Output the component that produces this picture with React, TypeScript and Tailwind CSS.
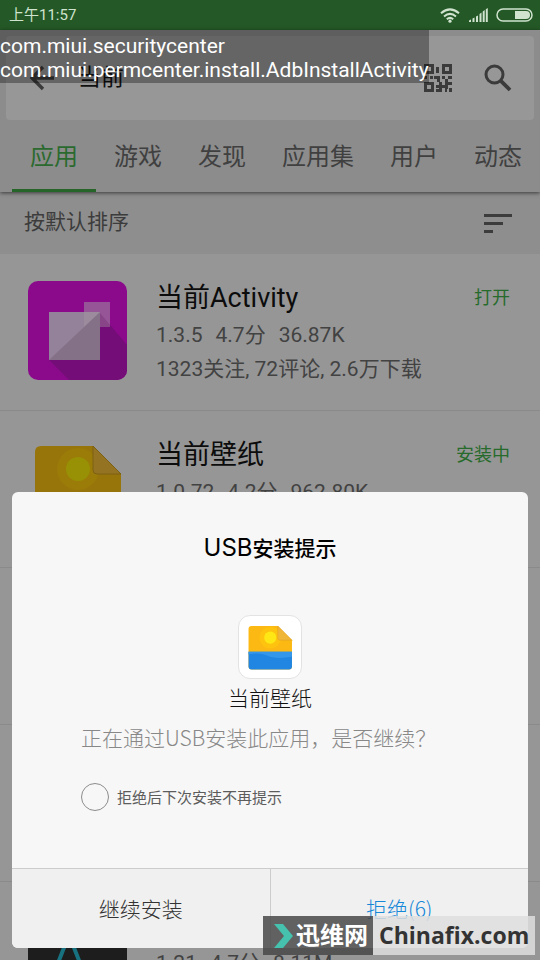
import { useState } from "react";
import type { ReactNode } from "react";
import clsx from "clsx";

type AppEntry = {
  name: string;
  stats: string[];
  counts?: string;
  action?: string;
  icon: ReactNode;
};

const TABS = ["应用", "游戏", "发现", "应用集", "用户", "动态"];

function ActivityIcon() {
  return (
    <svg viewBox="0 0 99 99" className="h-full w-full" aria-hidden="true">
      <defs>
        <clipPath id="activity-clip">
          <rect width="99" height="99" rx="10" />
        </clipPath>
      </defs>
      <g clipPath="url(#activity-clip)">
        <rect width="99" height="99" fill="#8a0a8b" />
        <path d="M21 79 41 99H99V64L72 32Z" fill="#750d78" />
        <rect x="56" y="21" width="26" height="25" fill="#965596" />
        <rect x="21" y="31" width="51" height="48" fill="#94829a" />
        <path d="M56 31H72V46H56Z" fill="#9b8b9d" />
        <path d="M21 79 72 31V79Z" fill="#847187" />
        <path d="M72 32 82 44V46H72Z" fill="#884588" />
      </g>
    </svg>
  );
}

function WallpaperIcon({ dimmed = false }: { dimmed?: boolean }) {
  return (
    <svg viewBox="0 0 99 99" className="h-full w-full" aria-hidden="true">
      <path
        d="M13 8H65L93 36V88Q93 94 87 94H13Q7 94 7 88V14Q7 8 13 8Z"
        fill={dimmed ? "#98750b" : "#fdb913"}
      />
      <circle cx="50" cy="31" r="21" fill={dimmed ? "#9b7c08" : "#fec30f"} />
      <circle cx="50" cy="31" r="12" fill={dimmed ? "#989105" : "#ffe716"} />
      <path
        d="M65 8 93 36H69Q65 36 65 32Z"
        fill={dimmed ? "#947422" : "#f0b638"}
        stroke={dimmed ? "#7d6113" : "#dfa21f"}
      />
      <path d="M7 59H93V88Q93 94 87 94H13Q7 94 7 88Z" fill={dimmed ? "#1b5994" : "#2086e2"} />
      <path d="M7 59H93V69Q60 74 45 67T7 64Z" fill={dimmed ? "#2064a0" : "#3597ea"} />
    </svg>
  );
}

function DarkIcon() {
  return (
    <svg viewBox="0 0 99 99" className="h-full w-full" aria-hidden="true">
      <rect width="99" height="99" rx="14" fill="#1d1d1d" />
      <path d="M30 54 41 26 52 54" fill="none" stroke="#17717f" strokeWidth="4" />
    </svg>
  );
}

const APPS: AppEntry[] = [
  {
    name: "当前Activity",
    stats: ["1.3.5", "4.7分", "36.87K"],
    counts: "1323关注, 72评论, 2.6万下载",
    action: "打开",
    icon: <ActivityIcon />,
  },
  {
    name: "当前壁纸",
    stats: ["1.0.72", "4.2分", "962.80K"],
    action: "安装中",
    icon: <WallpaperIcon dimmed />,
  },
  { name: "", stats: [], icon: null },
  { name: "", stats: [], icon: null },
  { name: "", stats: ["1.21", "4.7分", "8.11M"], icon: <DarkIcon /> },
];

function StatusBar() {
  return (
    <div className="flex h-[30px] shrink-0 items-center justify-between bg-[#245826] pr-[7px] pl-[9px] text-[#cfe3cf]">
      <span className="text-[15px]">上午11:57</span>
      <div className="flex items-center gap-2">
        <svg viewBox="0 0 20 15" className="h-[15px] w-5" aria-hidden="true">
          <g fill="none" stroke="currentColor" strokeWidth="2">
            <path d="M1 5.2Q10-2.4 19 5.2" />
            <path d="M4 8.4Q10 3.4 16 8.4" />
            <path d="M6.8 11.2Q10 8.6 13.2 11.2" />
          </g>
          <circle cx="10" cy="13.2" r="1.6" fill="currentColor" />
        </svg>
        <svg viewBox="0 0 20 14" className="h-[14px] w-5" fill="currentColor" aria-hidden="true">
          <path d="M1 14v-1.5l2-1V14ZM4.5 14v-3.5l2-1V14ZM8 14V8.5l2-1V14ZM11.5 14V6l2-1.5V14ZM14.7 14V3.5l2-1.5V14ZM17.8 14V1.2l2-1.2V14Z" />
        </svg>
        <svg viewBox="0 0 37 14" className="h-[14px] w-[37px]" aria-hidden="true">
          <rect x="1" y="1" width="35" height="12" rx="6" fill="none" stroke="currentColor" strokeWidth="1.5" />
          <path d="M19 3H30a4 4 0 0 1 0 8H19Z" fill="currentColor" />
        </svg>
      </div>
    </div>
  );
}

function SearchBar() {
  return (
    <div className="mx-1.5 flex h-[84px] items-center rounded bg-[#979797] pr-[21px] pl-[22px] text-[#3b3b3b]">
      <button type="button" aria-label="返回">
        <svg viewBox="0 0 40 40" className="size-10" aria-hidden="true">
          <path d="M26 20H5M15 9 4 20l11 11" fill="none" stroke="currentColor" strokeWidth="3.4" />
        </svg>
      </button>
      <input
        type="text"
        aria-label="搜索"
        defaultValue="当前"
        className="ml-[10px] w-0 flex-1 bg-transparent text-[23px] text-[#101010] outline-none"
      />
      <button type="button" aria-label="扫描二维码" className="mr-[31px]">
        <svg viewBox="0 0 28 28" className="size-7" fill="currentColor" aria-hidden="true">
          <path
            fillRule="evenodd"
            d="M0 0h10v10H0ZM3 3v4h4V3ZM18 0h10v10H18ZM21 3v4h4V3ZM0 18h10v10H0ZM3 21v4h4v-4Z"
          />
          <path d="M12 3h3v6h-3ZM0 12h3v3H0ZM6 12h3v3H6ZM10 12h6v6h-3v-3h-3ZM18 12h3v3h-3ZM24 12h4v3h-4ZM21 15h3v3h-3ZM15 18h3v3h-3ZM24 18h4v3h-4ZM12 21h9v-3h3v7h-3v-1h-3v4h-6v-3h3v-1h-3ZM25 24h3v4h-3ZM21 25h2v3h-2Z" />
        </svg>
      </button>
      <button type="button" aria-label="搜索应用">
        <svg viewBox="0 0 30 30" className="size-[30px]" fill="none" stroke="currentColor" aria-hidden="true">
          <circle cx="11.5" cy="11.5" r="8.5" strokeWidth="3" />
          <path d="m17.8 17.8 9.2 9.2" strokeWidth="3.8" />
        </svg>
      </button>
    </div>
  );
}

function TabBar() {
  const [active, setActive] = useState("应用");

  return (
    <nav className="flex h-[72px] pl-3 whitespace-nowrap">
      {TABS.map((tab) => (
        <button
          key={tab}
          type="button"
          onClick={() => setActive(tab)}
          className={clsx(
            "shrink-0 border-b-[3px] px-[18px] pt-1 text-2xl",
            active === tab ? "border-[#26652a] text-[#2b6a2f]" : "border-transparent text-[#404040]",
          )}
        >
          {tab}
        </button>
      ))}
    </nav>
  );
}

function AppRow({ app }: { app: AppEntry }) {
  return (
    <li className="flex h-[157px] shrink-0 items-start border-b border-[#8a8a8a] pt-6 pr-[30px] pl-7">
      <div className="mt-[3px] size-[99px] shrink-0">{app.icon}</div>
      <div className="ml-[29px] min-w-0 flex-1 text-[21px] leading-[34px] text-[#424242]">
        <h2 className="h-10 text-[27px] leading-10 text-[#0c0c0c]">{app.name}</h2>
        <p className="flex gap-[13px]">
          {app.stats.map((stat) => (
            <span key={stat}>{stat}</span>
          ))}
        </p>
        <p>{app.counts}</p>
      </div>
      {app.action && (
        <button type="button" className="text-lg leading-10 text-[#266b2b]">
          {app.action}
        </button>
      )}
    </li>
  );
}

function InstallDialog() {
  const [dontAsk, setDontAsk] = useState(false);

  return (
    <section
      role="dialog"
      aria-labelledby="install-title"
      className="absolute inset-x-3 bottom-3 overflow-hidden rounded-md bg-[#f7f7f7] font-['Noto_Sans_CJK_SC',sans-serif] text-[21px]"
    >
      <h1 id="install-title" className="pt-[39px] text-center leading-8 font-medium text-black">
        <span className="font-[Inter,sans-serif] text-2xl leading-8 font-normal">USB</span>安装提示
      </h1>
      <div className="mx-auto mt-[51px] size-16 rounded-xl border border-[#e3e3e3] bg-white p-[6px]">
        <WallpaperIcon />
      </div>
      <p className="mt-[2px] text-center leading-8 font-light text-[#111]">当前壁纸</p>
      <p className="mt-2 px-[69px] leading-8 font-light text-[#888]">正在通过USB安装此应用，是否继续？</p>
      <label className="mt-[30px] flex h-7 items-center gap-2 px-[69px] text-[15px] text-[#5c5c5c]">
        <input
          type="checkbox"
          checked={dontAsk}
          onChange={(e) => setDontAsk(e.target.checked)}
          className="size-7 appearance-none rounded-full border border-[#8c8c8c] checked:bg-[#2196e3]"
        />
        拒绝后下次安装不再提示
      </label>
      <div className="mt-[57px] flex h-20 border-t border-[#cccccc] bg-[#f0f0f0] font-light">
        <button type="button" className="flex-1 border-r border-[#cccccc] text-[#333]">
          继续安装
        </button>
        <button type="button" className="flex-1 text-[#1588d8]">
          拒绝(6)
        </button>
      </div>
    </section>
  );
}

function Watermark() {
  return (
    <div className="absolute right-[5px] bottom-[5px] flex h-[39px] items-center font-bold">
      <div className="flex h-full w-[110px] items-center bg-[#484848]/85 pl-[11px] text-white">
        <svg viewBox="0 0 21 24" className="h-6 w-[21px] shrink-0" aria-hidden="true">
          <path d="M0 0h9l10 12L9 24H0l10-12Z" fill="#45c1ad" />
        </svg>
        <span className="ml-px text-2xl whitespace-nowrap">迅维网</span>
      </div>
      <div className="flex h-full w-[162px] items-center bg-[#dedede]/85 pl-[6px] font-['Open_Sans',sans-serif] text-[23px] text-[#333]">
        Chinafix.com
      </div>
    </div>
  );
}

export default function App() {
  return (
    <div className="relative flex h-screen flex-col overflow-hidden bg-[#969696] font-[Roboto,'Noto_Sans_CJK_SC',sans-serif]">
      <StatusBar />
      <header className="relative shrink-0 bg-[#8c8c8c] pt-1.5 shadow-[0_1px_4px_rgba(0,0,0,0.6)]">
        <SearchBar />
        <TabBar />
      </header>
      <div className="flex h-[62px] shrink-0 items-center justify-between bg-[#8e8e8e] pr-7 pl-6 text-[21px] text-[#3c3c3c]">
        <span>按默认排序</span>
        <button type="button" aria-label="排序">
          <svg viewBox="0 0 28 19" className="h-[19px] w-7" fill="currentColor" aria-hidden="true">
            <path d="M0 0h28v3H0ZM0 8h19v3H0ZM0 16h9v3H0Z" />
          </svg>
        </button>
      </div>
      <ul className="flex flex-col">
        {APPS.map((app, i) => (
          <AppRow key={i} app={app} />
        ))}
      </ul>
      <div className="absolute top-[30px] left-0 bg-black/33 pt-1 pb-px text-[21px] leading-6 text-white">
        <p>com.miui.securitycenter</p>
        <p>com.miui.permcenter.install.AdbInstallActivity</p>
      </div>
      <InstallDialog />
      <Watermark />
    </div>
  );
}
